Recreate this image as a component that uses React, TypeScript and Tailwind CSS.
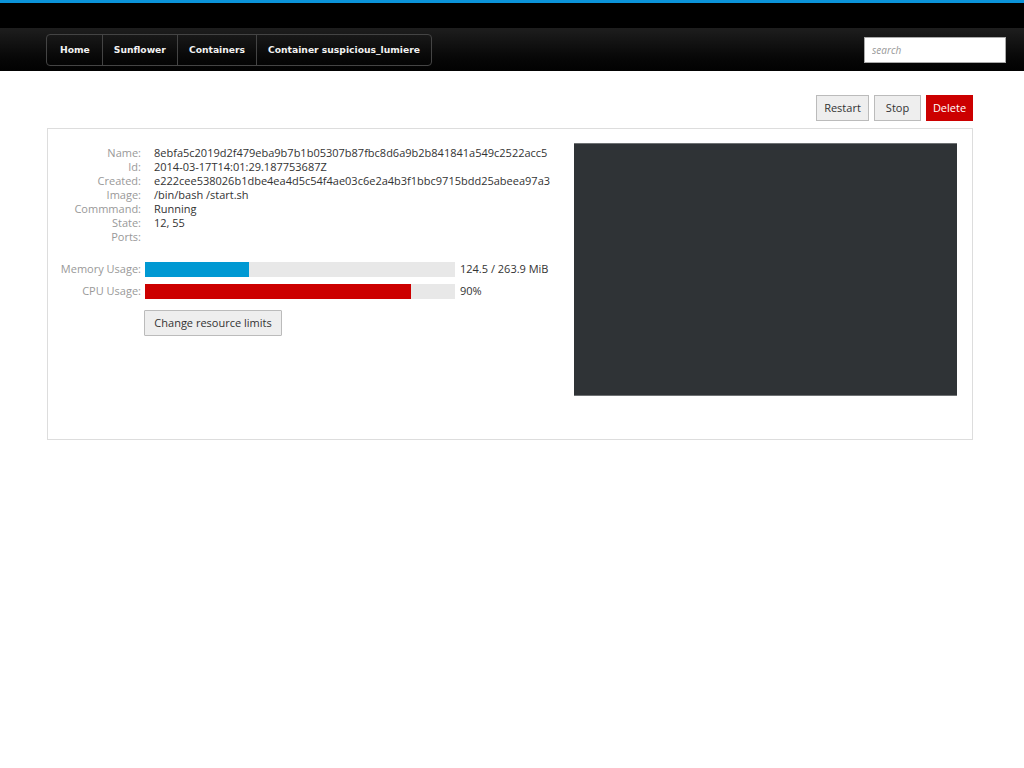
import React from 'react';

const details: [string, string][] = [
    ['Name:', '8ebfa5c2019d2f479eba9b7b1b05307b87fbc8d6a9b2b841841a549c2522acc5'],
    ['Id:', '2014-03-17T14:01:29.187753687Z'],
    ['Created:', 'e222cee538026b1dbe4ea4d5c54f4ae03c6e2a4b3f1bbc9715bdd25abeea97a3'],
    ['Image:', '/bin/bash /start.sh'],
    ['Commmand:', 'Running'],
    ['State:', '12, 55'],
    ['Ports:', ''],
];

const crumbs = ['Home', 'Sunflower', 'Containers', 'Container suspicious_lumiere'];

const UsageBar = ({ label, pct, color, text }: { label: string; pct: number; color: string; text: string }) => (
    <div className="flex h-[22px] items-center">
        <div className="w-[93px] shrink-0 text-right text-[#999]">{label}</div>
        <div className="ml-[4px] h-[15px] w-[310px] shrink-0 bg-[#e8e8e8]">
            <div className={`h-full ${color}`} style={{ width: `${pct}%` }} />
        </div>
        <div className="ml-[5px] whitespace-nowrap text-[#333]">{text}</div>
    </div>
);

const App = () => {
    return (
        <div className="min-h-[768px] bg-white text-[11px] leading-[14px]" style={{ fontFamily: '"Open Sans", sans-serif' }}>
            <header>
                <div className="h-[3px] bg-[#0b93d9]" />
                <div className="h-[25px] bg-black" />
                <div className="flex h-[43px] items-center justify-between bg-gradient-to-b from-[#1e1e1e] to-[#020202] pl-[46px] pr-[18px]">
                    <nav
                        className="flex h-[32px] overflow-hidden rounded-[4px] border border-[#444]"
                        style={{ fontFamily: '"DejaVu Sans", sans-serif' }}
                    >
                        {crumbs.map((c, i) => (
                            <a
                                key={c}
                                href="#"
                                className={`flex items-center text-[9.2px] font-bold text-[#f2f2f2] ${i > 0 ? 'border-l border-[#444] px-[11px]' : 'pl-[13px] pr-[12px]'}`}
                            >
                                {c}
                            </a>
                        ))}
                    </nav>
                    <input
                        placeholder="search"
                        className="h-[26px] w-[142px] border border-[#aaa] bg-white px-[7px] text-[10px] italic text-[#333] outline-none placeholder:text-[#999]"
                    />
                </div>
            </header>

            <main className="box-content w-[926px] pl-[47px]">
                <div className="mt-[24px] flex justify-end gap-[5px]">
                    <button className="h-[26px] w-[53px] border border-[#bbb] bg-[#eee] text-[11px] text-[#333]">Restart</button>
                    <button className="h-[26px] w-[47px] border border-[#bbb] bg-[#eee] text-[11px] text-[#333]">Stop</button>
                    <button className="h-[26px] w-[47px] border border-[#c00] bg-[#cc0000] text-[11px] text-white">Delete</button>
                </div>

                <div className="mt-[7px] flex h-[312px] border border-[#ddd]">
                    <div className="w-[526px] shrink-0 pt-[17px]">
                        {details.map(([k, v]) => (
                            <div key={k} className="flex h-[14px] items-center">
                                <div className="w-[93px] shrink-0 text-right text-[#999]">{k}</div>
                                <div className="ml-[13px] whitespace-nowrap text-[#333]">{v}</div>
                            </div>
                        ))}
                        <div className="mt-[14px]">
                            <UsageBar label="Memory Usage:" pct={33.5} color="bg-[#0099d3]" text="124.5 / 263.9 MiB" />
                            <UsageBar label="CPU Usage:" pct={85.8} color="bg-[#cc0000]" text="90%" />
                        </div>
                        <button className="ml-[96px] mt-[8px] h-[26px] w-[138px] rounded-[1px] border border-[#bbb] bg-[#eee] text-[11px] text-[#333]">
                            Change resource limits
                        </button>
                    </div>
                    <div className="pt-[14px]">
                        <div className="h-[253px] w-[383px] border-y border-[#6e7173] bg-[#2f3336]" />
                    </div>
                </div>
            </main>
        </div>
    );
};

export default App;
